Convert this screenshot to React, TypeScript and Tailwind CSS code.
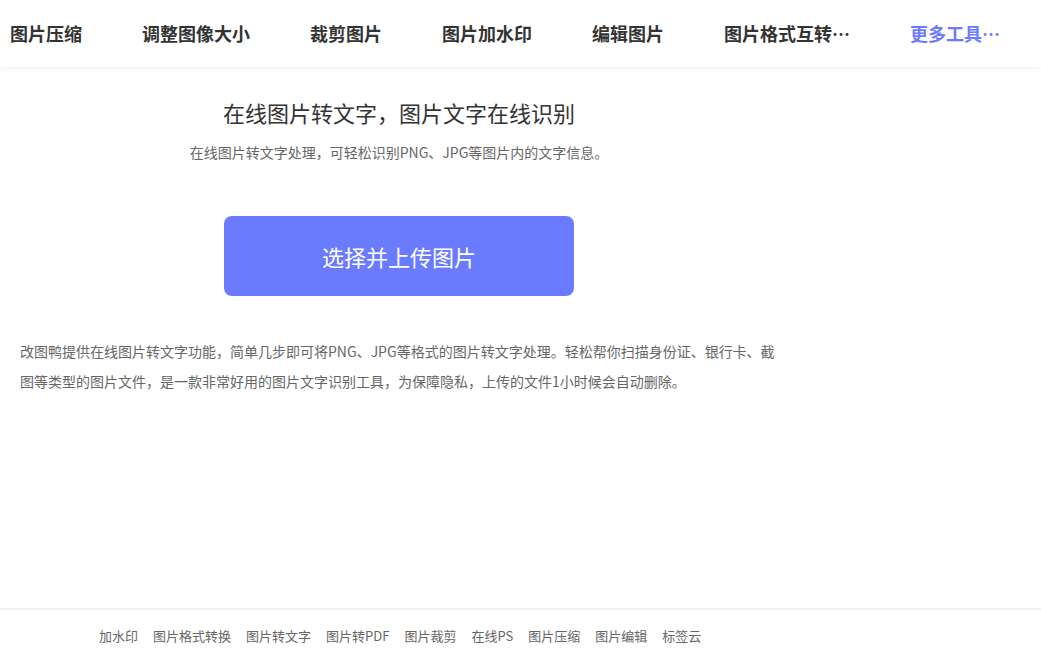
import React from 'react';

const navItems = ['图片压缩', '调整图像大小', '裁剪图片', '图片加水印', '编辑图片', '图片格式互转…'];

const footerLinks = ['加水印', '图片格式转换', '图片转文字', '图片转PDF', '图片裁剪', '在线PS', '图片压缩', '图片编辑', '标签云'];

export default function App() {
  return (
    <div
      className="h-screen flex flex-col bg-white overflow-hidden"
      style={{ fontFamily: '"Noto Sans CJK SC", "Noto Sans", sans-serif' }}
    >
      {/* Header */}
      <header className="h-[67px] shrink-0 flex items-center pl-[10px] gap-[60px] shadow-[0_2px_6px_rgba(0,0,0,0.05)] relative z-10">
        {navItems.map((item) => (
          <a key={item} className="text-[18px] font-bold text-[#333] whitespace-nowrap cursor-pointer">
            {item}
          </a>
        ))}
        <a className="text-[18px] font-bold text-[#6b7bff] whitespace-nowrap cursor-pointer">更多工具…</a>
      </header>

      {/* Main */}
      <main className="flex-1">
        <div className="w-[798px] flex flex-col items-center">
          <h1 className="mt-[30px] text-[22px] leading-[30px] text-[#333]">在线图片转文字，图片文字在线识别</h1>
          <p className="mt-[15px] text-[14px] leading-[20px] text-[#666]">
            在线图片转文字处理，可轻松识别PNG、JPG等图片内的文字信息。
          </p>
          <button className="mt-[54px] w-[350px] h-[80px] rounded-lg bg-[#6b7bff] text-white text-[22px]">
            选择并上传图片
          </button>
          <p className="mt-[40px] px-5 self-stretch text-[14px] leading-[30px] text-[#666]">
            改图鸭提供在线图片转文字功能，简单几步即可将PNG、JPG等格式的图片转文字处理。轻松帮你扫描身份证、银行卡、截图等类型的图片文件，是一款非常好用的图片文字识别工具，为保障隐私，上传的文件1小时候会自动删除。
          </p>
        </div>
      </main>

      {/* Footer */}
      <footer className="h-[49px] shrink-0 border-t-2 border-[#f0f0f5] flex items-center pt-[4px] pl-[99px] gap-[15px]">
        {footerLinks.map((link) => (
          <a key={link} className="text-[13px] text-[#666] cursor-pointer whitespace-nowrap">
            {link}
          </a>
        ))}
      </footer>
    </div>
  );
}
